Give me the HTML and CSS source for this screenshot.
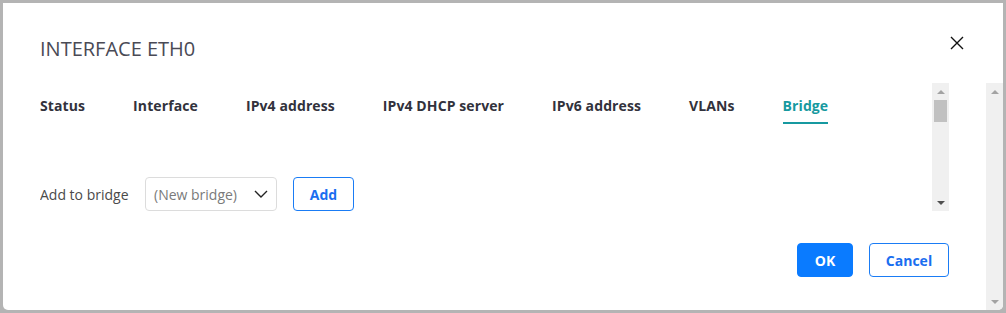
FILE: index.html
```html
<!DOCTYPE html>
<html lang="en">

<head>
  <meta charset="UTF-8">
  <meta name="viewport" content="width=device-width, initial-scale=1.0">
  <title>Interface eth0</title>
  <link rel="stylesheet" href="styles.css">
</head>

<body>
  <div class="dialog">
    <div class="dialog-header">
      <h1 class="dialog-title">INTERFACE ETH0</h1>
      <button class="close-btn" aria-label="Close">
        <svg width="14" height="14" viewBox="0 0 14 14">
          <path d="M1 1 L13 13 M13 1 L1 13" stroke="#111" stroke-width="1.4" fill="none" />
        </svg>
      </button>
    </div>

    <div class="dialog-body">
      <div class="main">
        <div class="panel">
          <div class="panel-content">
            <nav class="tabs">
              <span class="tab">Status</span>
              <span class="tab">Interface</span>
              <span class="tab">IPv4 address</span>
              <span class="tab">IPv4 DHCP server</span>
              <span class="tab">IPv6 address</span>
              <span class="tab">VLANs</span>
              <span class="tab active">Bridge</span>
            </nav>

            <div class="form-row">
              <label class="form-label">Add to bridge</label>
              <div class="select">
                <span>(New bridge)</span>
                <svg width="14" height="8" viewBox="0 0 14 8">
                  <path d="M1 1 L7 7 L13 1" stroke="#222" stroke-width="1.4" fill="none" />
                </svg>
              </div>
              <button class="btn btn-outline btn-add">Add</button>
            </div>
          </div>

          <div class="scrollbar inner">
            <span class="arrow up"></span>
            <span class="thumb"></span>
            <span class="track"></span>
            <span class="arrow down active"></span>
          </div>
        </div>

        <div class="dialog-footer">
          <button class="btn btn-primary btn-ok">OK</button>
          <button class="btn btn-outline btn-cancel">Cancel</button>
        </div>
      </div>

      <div class="scrollbar outer">
        <span class="arrow up"></span>
        <span class="track"></span>
        <span class="arrow down"></span>
      </div>
    </div>
  </div>
</body>

</html>
```

FILE: styles.css
```css
* {
  box-sizing: border-box;
}

html,
body {
  height: 100%;
}

body {
  margin: 0;
  padding: 3px;
  background-color: #b4b4b4;
  font-family: "Open Sans", "Noto Sans", sans-serif;
  color: #333;
}

.dialog {
  height: 100%;
  background: #fff;
  border-radius: 0 0 5px 5px;
  overflow: hidden;
  display: flex;
  flex-direction: column;
}

.dialog-header {
  height: 80px;
  padding: 32px 39px 0 37px;
  display: flex;
  justify-content: space-between;
  align-items: flex-start;
}

.dialog-title {
  margin: 0;
  font-size: 20px;
  line-height: 28px;
  font-weight: 400;
  color: #4a4a55;
}

.close-btn {
  margin-top: 1px;
  padding: 0;
  border: none;
  background: none;
  width: 14px;
  height: 14px;
  cursor: pointer;
}

.close-btn svg {
  display: block;
}

.dialog-body {
  flex: 1;
  display: flex;
  min-height: 0;
}

.main {
  flex: 1;
  padding: 0 37px;
  display: flex;
  flex-direction: column;
}

.panel {
  height: 128px;
  display: flex;
}

.panel-content {
  flex: 1;
  overflow: hidden;
}

.tabs {
  display: flex;
  gap: 48px;
}

.tab {
  padding: 13px 0 6px;
  border-bottom: 2px solid transparent;
  font-size: 14px;
  line-height: 20px;
  font-weight: 700;
  letter-spacing: 0.1px;
  color: #32323c;
  cursor: pointer;
}

.tab.active {
  color: #1699a0;
  border-bottom-color: #1699a0;
}

.form-row {
  margin-top: 53px;
  display: flex;
  align-items: center;
}

.form-label {
  width: 105px;
  font-size: 14px;
  color: #4a4a4a;
}

.select {
  width: 132px;
  height: 34px;
  padding: 0 8px 0 8px;
  border: 1px solid #dcdcdc;
  border-radius: 4px;
  display: flex;
  align-items: center;
  justify-content: space-between;
  font-size: 14px;
  color: #7a7a7a;
}

.btn {
  height: 34px;
  border-radius: 4px;
  font-family: inherit;
  font-size: 14px;
  font-weight: 700;
  cursor: pointer;
}

.btn-outline {
  background: #fff;
  border: 1px solid #1a7cf5;
  color: #1a6ef0;
}

.btn-primary {
  background: #0a7bff;
  border: 1px solid #0a7bff;
  color: #fff;
}

.btn-add {
  margin-left: 16px;
  width: 61px;
}

.dialog-footer {
  margin-top: 32px;
  display: flex;
  justify-content: flex-end;
  gap: 16px;
}

.btn-ok {
  width: 56px;
}

.btn-cancel {
  width: 80px;
}

/* fake scrollbars */
.scrollbar {
  width: 17px;
  background: #f0f0f0;
  display: flex;
  flex-direction: column;
  align-items: center;
}

.scrollbar .arrow {
  height: 17px;
  width: 17px;
  display: flex;
  justify-content: center;
  align-items: center;
}

.scrollbar .arrow::after {
  content: "";
  border-left: 4px solid transparent;
  border-right: 4px solid transparent;
}

.scrollbar .arrow.up::after {
  border-bottom: 4px solid #a3a3a3;
}

.scrollbar .arrow.down::after {
  border-top: 4px solid #a3a3a3;
}

.scrollbar .arrow.down.active::after {
  border-top-color: #505050;
}

.scrollbar .thumb {
  width: 13px;
  height: 22px;
  background: #c1c1c1;
}

.scrollbar .track {
  flex: 1;
}
```
